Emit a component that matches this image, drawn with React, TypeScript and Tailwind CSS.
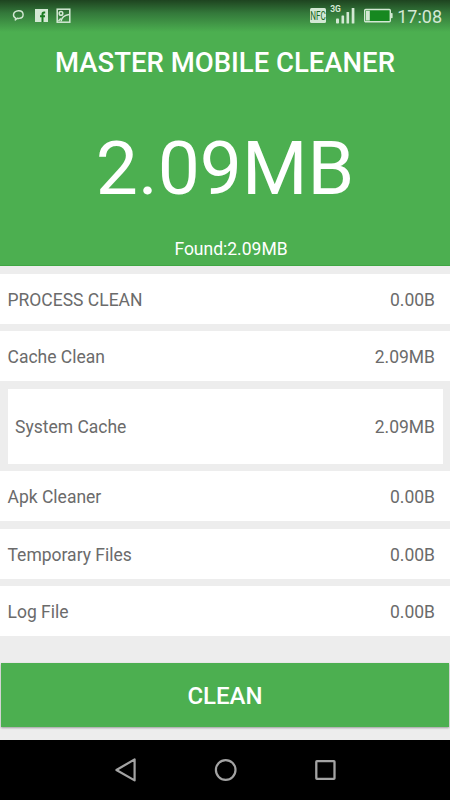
import React from 'react';
import clsx from 'clsx';

interface JunkItem {
  label: string;
  size: string;
  /** Inset card nested below its parent row */
  nested?: boolean;
  className: string;
}

const items: JunkItem[] = [
  { label: 'PROCESS CLEAN', size: '0.00B', className: 'h-[50px]' },
  { label: 'Cache Clean', size: '2.09MB', className: 'mt-[7px] h-[50px]' },
  { label: 'System Cache', size: '2.09MB', nested: true, className: 'mt-2 h-[75px]' },
  { label: 'Apk Cleaner', size: '0.00B', className: 'mt-[7px] h-[50px]' },
  { label: 'Temporary Files', size: '0.00B', className: 'mt-2 h-[50px]' },
  { label: 'Log File', size: '0.00B', className: 'mt-[7px] h-[50px]' },
];

/** Android status bar: notifications on the left, system state on the right */
const StatusBar: React.FC = () => (
  <div className="flex h-8 items-start justify-between bg-linear-to-b from-[#1e4420] via-[#33783a] via-40% to-[#4caf50] pr-2 pl-3 text-[#d3e8d4]">
    <div className="flex items-center pt-2">
      <svg width="14" height="16" viewBox="0 0 14 16" fill="none" stroke="currentColor" strokeWidth="1.4">
        <path d="M3.6 10.2C.3 8.3.7 3.2 6.4 2.7c6-.3 6.3 7.3.7 7.7-.8.1-1.4 0-1.8-.1l-2 1.8z" strokeLinejoin="round" />
      </svg>
      <svg className="ml-[9px]" width="13" height="16" viewBox="0 0 13 16">
        <rect y="1" width="13" height="13" fill="currentColor" />
        <path d="M10.2 4.4H9c-1 0-1.5.5-1.5 1.5V14M5 8.2h5" fill="none" stroke="#1b7a22" strokeWidth="2" />
      </svg>
      <svg className="ml-2" width="15" height="16" viewBox="0 0 15 16" fill="none" stroke="currentColor">
        <rect x="1.2" y="1.2" width="12.6" height="13" strokeWidth="1.5" />
        <circle cx="5" cy="5.4" r="1.8" strokeWidth="1.5" />
        <path d="M5 13.5C5.5 10 8 7.4 13 6.6M2.5 13l2.3-2.6" strokeWidth="1.5" />
      </svg>
    </div>

    <div className="flex items-start">
      <div className="mt-2 flex h-[15px] w-4 items-center justify-center rounded-[1.5px] bg-[#d3e8d4]">
        <span className="scale-x-[.6] text-[13.5px] leading-[15px] text-[#1f6b26]">NFC</span>
      </div>
      <div className="ml-1 flex h-6 flex-col pt-1">
        <span className="h-2 text-[8.5px] leading-[10px] font-bold">3G</span>
        <svg className="-mt-2" width="26" height="20" viewBox="0 0 26 20" fill="currentColor">
          <rect x="6" y="14.6" width="3" height="5" rx=".8" />
          <rect x="11.5" y="11.5" width="2.6" height="8.1" rx=".6" />
          <rect x="16.5" y="8" width="2.6" height="11.6" rx=".6" />
          <rect x="21.7" y="4" width="2.7" height="15.6" rx=".6" />
        </svg>
      </div>
      <svg className="mt-2 ml-2" width="29" height="16" viewBox="0 0 29 16">
        <rect x=".7" y="1.5" width="25.6" height="12.3" rx="1" fill="#168820" stroke="currentColor" strokeWidth="1.4" />
        <rect x="2" y="2.7" width="3.8" height="9.9" fill="currentColor" />
        <rect x="26.8" y="5" width="1.8" height="5.2" rx=".7" fill="currentColor" />
      </svg>
      <span className="mt-[6px] ml-1 text-[18px] leading-[21px]">17:08</span>
    </div>
  </div>
);

const JunkRow: React.FC<{ item: JunkItem }> = ({ item }) => (
  <li
    className={clsx(
      'flex shrink-0 items-center justify-between bg-white pt-0.5 text-[17.5px] text-[#6b6b6b]',
      item.nested ? 'mx-[7.5px] px-[7.5px]' : 'pr-[15px] pl-[7.5px]',
      item.className,
    )}
  >
    <span>{item.label}</span>
    <span>{item.size}</span>
  </li>
);

/** Back / home / recents */
const NavBar: React.FC = () => (
  <nav className="flex h-[60px] items-center justify-center gap-[76px] bg-black text-[#a3a3a3]">
    <svg width="24" height="24" viewBox="0 0 24 24" fill="none" stroke="currentColor" strokeWidth="2.2">
      <path d="M21.6 1.4v21L3.4 12z" strokeLinejoin="round" />
    </svg>
    <svg width="24" height="24" viewBox="0 0 24 24" fill="none" stroke="currentColor" strokeWidth="2.2">
      <circle cx="12.7" cy="12" r="9.8" />
    </svg>
    <svg width="24" height="24" viewBox="0 0 24 24" fill="none" stroke="currentColor" strokeWidth="2.3">
      <rect x="3.3" y="3.2" width="18.2" height="17.6" rx=".6" />
    </svg>
  </nav>
);

export default function App() {
  return (
    <div className="flex h-[800px] w-[450px] flex-col overflow-hidden bg-[#ededed] font-['Roboto',sans-serif]">
      <header className="flex h-[266px] flex-col border-b border-[#3fa643] bg-[#4caf50] text-white">
        <StatusBar />
        <h1 className="mt-[15px] text-center text-[27.5px] leading-8 font-medium">MASTER MOBILE CLEANER</h1>
        <p className="mt-[45px] text-center text-[75px] leading-[88px]">2.09MB</p>
        <p className="mt-[27px] pl-3 text-center text-[17.5px] leading-5">Found:2.09MB</p>
      </header>

      <ul className="flex flex-1 flex-col pt-2">
        {items.map((item) => (
          <JunkRow key={item.label} item={item} />
        ))}
      </ul>

      <button className="mx-px mb-[13px] h-16 shrink-0 bg-[#4caf50] pt-px text-[24px] font-medium text-white shadow-[0_1px_2px_rgba(0,0,0,0.35)]">
        CLEAN
      </button>
      <NavBar />
    </div>
  );
}
